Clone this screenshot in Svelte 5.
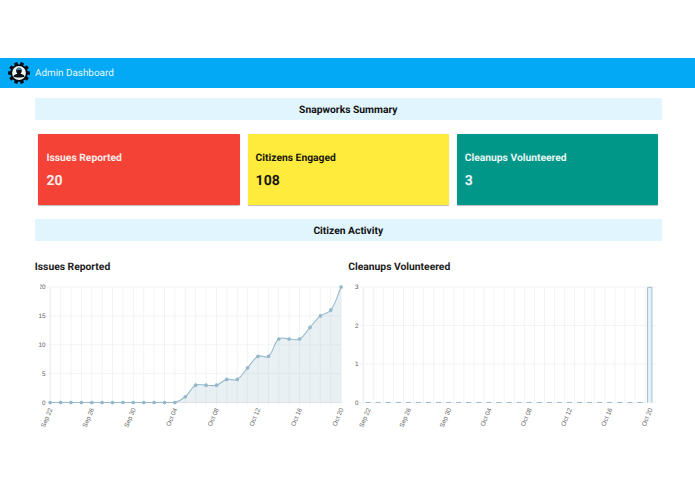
<script>
  const values = [0, 0, 0, 0, 0, 0, 0, 0, 0, 0, 0, 0, 0, 1, 3, 3, 3, 4, 4, 6, 8, 8, 11, 11, 11, 13, 15, 16, 20];
  const dates = ['Sep 22', 'Sep 26', 'Sep 30', 'Oct 04', 'Oct 08', 'Oct 12', 'Oct 16', 'Oct 20'];
  const cards = [
    { title: 'Issues Reported', value: 20, tone: 'red' },
    { title: 'Citizens Engaged', value: 108, tone: 'yellow' },
    { title: 'Cleanups Volunteered', value: 3, tone: 'teal' }
  ];

  const top = 7;
  const bottom = 122.5;
  const lineX = (i) => 15.2 + i * 10.39;
  const barX = (i) => 15.2 + i * 10.07;
  const points = values.map((v, i) => ({ x: lineX(i), y: bottom - (v * (bottom - top)) / 20 }));
  const clamp = (y) => Math.max(top, Math.min(bottom, y));

  // Cardinal spline with a tension of 0.4, kept inside the plot area.
  const controls = points.map((p, i) => {
    const a = points[i - 1] ?? p;
    const b = points[i + 1] ?? p;
    const d1 = Math.hypot(p.x - a.x, p.y - a.y);
    const d2 = Math.hypot(b.x - p.x, b.y - p.y);
    const f1 = (0.4 * d1) / (d1 + d2);
    const f2 = (0.4 * d2) / (d1 + d2);
    return {
      px: p.x - f1 * (b.x - a.x), py: clamp(p.y - f1 * (b.y - a.y)),
      nx: p.x + f2 * (b.x - a.x), ny: clamp(p.y + f2 * (b.y - a.y))
    };
  });
  const curve = points
    .map((p, i) => i === 0
      ? `M${p.x} ${p.y}`
      : `C${controls[i - 1].nx} ${controls[i - 1].ny} ${controls[i].px} ${controls[i].py} ${p.x} ${p.y}`)
    .join(' ');
  const area = `${curve} V${bottom} H${points[0].x} Z`;
  const teeth = [18, 54, 90, 126, 162, 198, 234, 270, 306, 342];
</script>

<div class="page">
  <header>
    <svg class="logo" viewBox="0 0 22 22" aria-hidden="true">
      {#each teeth as angle}
        <path d="M9.3 3.5 V.1 H12.7 V3.5Z" transform="rotate({angle} 11 11)" fill="#050b10" />
      {/each}
      <circle cx="11" cy="11" r="8.7" fill="#050b10" />
      <circle cx="11" cy="11" r="6.9" fill="#eef6fa" />
      <path d="M5.3 14.7 C5.6 12.6 7.8 12.4 9.4 11.8 C7.4 9.6 7.8 5.8 11 5.8 C14.2 5.8 14.6 9.6 12.6 11.8 C14.2 12.4 16.4 12.6 16.7 14.7 C14.5 15.8 7.5 15.8 5.3 14.7Z" fill="#080d11" />
      <path d="M8.4 8.3 Q8.8 5.4 11 5.4 Q13.2 5.4 13.6 8.3 Q11 7.5 8.4 8.3Z" fill="#48799a" />
    </svg>
    <span>Admin Dashboard</span>
  </header>

  <main>
    <h2 class="band">Snapworks Summary</h2>
    <section class="cards">
      {#each cards as card}
        <article class={card.tone}>
          <h3>{card.title}</h3>
          <strong>{card.value}</strong>
        </article>
      {/each}
    </section>
    <h2 class="band">Citizen Activity</h2>

    <section class="charts">
      <div class="chart">
        <h3>Issues Reported</h3>
        <svg width="313" height="155" viewBox="0 0 313 155">
          <g class="grid">
            {#each points as p, i}
              <line x1={p.x} x2={p.x} y1={top} y2={bottom + 3} class:axis={i === 0} />
            {/each}
            {#each [0, 5, 10, 15, 20] as v}
              <line x1="12" x2="306.5" y1={bottom - v * 5.775} y2={bottom - v * 5.775} class:axis={v === 0} />
            {/each}
          </g>
          <path d={area} fill="#97bbcd" fill-opacity=".22" />
          <path d={curve} fill="none" stroke="#97bbcd" stroke-width="1.1" />
          {#each points as p}
            <circle cx={p.x} cy={p.y} r="1.85" fill="#94b8cb" />
          {/each}
          <g class="labels">
            {#each [0, 5, 10, 15] as v}
              <text x="10.5" y={bottom + 2.1 - v * 5.775} text-anchor="end">{v}</text>
            {/each}
            <svg x="5" y="0" width="10" height="14"><text x="5.5" y="9.1" text-anchor="end">20</text></svg>
            {#each dates as date, i}
              <text transform="translate({lineX(i * 4) + 2.5} 129.3) rotate(-67)" text-anchor="end">{date}</text>
            {/each}
          </g>
        </svg>
      </div>

      <div class="chart">
        <h3>Cleanups Volunteered</h3>
        <svg width="313" height="155" viewBox="0 0 313 155">
          <g class="grid">
            {#each Array(29) as _, i}
              <line x1={barX(i)} x2={barX(i)} y1={top} y2={bottom + 1.5} class:axis={i === 0} />
            {/each}
            {#each [0, 1, 2, 3] as v}
              <line x1="12" x2="308.5" y1={bottom - v * 38.5} y2={bottom - v * 38.5} />
            {/each}
          </g>
          {#each Array(28) as _, i}
            <line x1={barX(i) + 2.3} x2={barX(i) + 7.4} y1={bottom} y2={bottom} stroke="#a0bfce" stroke-width="1" />
          {/each}
          <rect x={barX(28) + 2.4} y={top + 0.3} width="4.4" height={bottom - top} fill="#e6f1f7" />
          <path d="M{barX(28) + 2.4} {bottom} V{top + 0.3} h4.4 V{bottom}" fill="none" stroke="#a0bfce" stroke-width="1" />
          <g class="labels">
            {#each [0, 1, 2, 3] as v}
              <text x="10.5" y={bottom + 2.1 - v * 38.5} text-anchor="end">{v}</text>
            {/each}
            {#each dates as date, i}
              <text transform="translate({barX(i * 4) + 7.6} 129.3) rotate(-67)" text-anchor="end">{date}</text>
            {/each}
          </g>
        </svg>
      </div>
    </section>
  </main>
</div>

<style>
  :global(body) { margin: 0; background: #fff; }
  .page { box-sizing: border-box; height: 494px; padding-top: 58px; overflow: hidden; font-family: Roboto, sans-serif; color: #212121; text-rendering: geometricPrecision; }
  header { display: flex; align-items: center; height: 30.4px; padding-left: 8px; background: #03a9f4; color: #e9f7fe; font-size: 9.9px; }
  .logo { width: 22px; height: 22px; margin: -1px 5px 0 0; }
  main { width: 627px; margin: 9.9px 0 0 34.8px; }
  h2, h3 { margin: 0; font-size: 10.3px; font-weight: 700; line-height: 12px; }
  .band { box-sizing: border-box; height: 22px; padding-top: 1px; line-height: 22px; text-align: center; background: #e1f5fe; color: #111; }
  .cards { display: flex; gap: 8px; padding: 14px 4px 13.5px 3.7px; }
  article { box-sizing: border-box; flex: 1; height: 71px; padding: 18px 8px 0; border-radius: 1px; box-shadow: 0 .5px 1px #0004; }
  article strong { display: block; margin-top: 9px; font-size: 14px; line-height: 17px; }
  .red { background: #f44336; color: #fdeceb; }
  .yellow { background: #ffeb3b; color: #17160a; }
  .teal { background: #009688; color: #e8f7f5; }
  .charts { display: flex; padding-top: 20.7px; }
  .chart { width: 313.5px; }
  .chart svg { display: block; }
  .chart > svg { margin-top: 6.8px; }
  .grid line { stroke: #f2f3f4; stroke-width: 1; }
  .grid .axis { stroke: #e6e8ea; }
  .labels { font-family: "Liberation Sans", Arial, sans-serif; font-size: 6.4px; fill: #666; }
</style>
